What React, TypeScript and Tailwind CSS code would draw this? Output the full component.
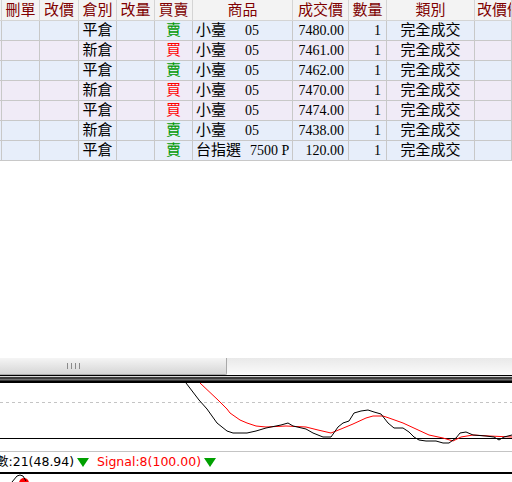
import React from 'react';

const rows = [
  { pos: '平倉', side: '賣', name: '小臺', code: '05', price: '7480.00' },
  { pos: '新倉', side: '買', name: '小臺', code: '05', price: '7461.00' },
  { pos: '平倉', side: '賣', name: '小臺', code: '05', price: '7462.00' },
  { pos: '新倉', side: '買', name: '小臺', code: '05', price: '7470.00' },
  { pos: '平倉', side: '買', name: '小臺', code: '05', price: '7474.00' },
  { pos: '新倉', side: '賣', name: '小臺', code: '05', price: '7438.00' },
  { pos: '平倉', side: '賣', name: '台指選', code: '7500 P', price: '120.00' },
];

const cols = 'grid grid-cols-[2px_38px_39px_38px_38px_38px_100px_56px_38px_88px_1fr]';
const cell = 'border-r border-b border-[#c8c8c8] flex items-center overflow-hidden whitespace-nowrap';
const headCell = 'border-r border-b border-[#d4d4d4] flex items-center justify-center overflow-hidden whitespace-nowrap';

const black =
  '186,383 199,400 207,409 217,423 227,431 233,433 247,433 256,431 266,428 281,425 288,423 293,426 306,429 313,433 323,437 331,437 338,427 343,423 349,421 354,413 361,411 368,410 374,412 381,414 388,423 394,428 403,428 409,432 414,437 419,440 426,441 436,441 443,443 449,443 456,438 460,433 466,432 473,435 486,436 494,437 499,440 504,437 512,435';
const red =
  '200,383 218,400 227,409 230,413 240,420 247,423 256,426 266,427 286,426 306,427 318,430 331,433 341,429 353,424 366,418 373,416 383,416 389,418 403,423 416,429 429,435 443,438 453,441 461,437 473,435 489,436 512,437';

function Tri() {
  return (
    <svg width="12" height="9" viewBox="0 0 12 9" className="shrink-0 block">
      <polygon points="0,0 12,0 6,9" fill="#00a000" />
    </svg>
  );
}

export default function App() {
  return (
    <div className="w-[512px] h-[482px] overflow-hidden bg-white flex flex-col font-[family-name:'Liberation_Serif','Noto_Sans_CJK_TC',serif] text-[15px] text-black">
      {/* Orders table */}
      <div className="h-[161px] shrink-0">
        <div className={`${cols} h-[21px] bg-[#f3f3f3] text-[#800000]`}>
          <div className={headCell}></div>
          <div className={headCell}>刪單</div>
          <div className={headCell}>改價</div>
          <div className={headCell}>倉別</div>
          <div className={headCell}>改量</div>
          <div className={headCell}>買賣</div>
          <div className={headCell}>商品</div>
          <div className={headCell}>成交價</div>
          <div className={headCell}>數量</div>
          <div className={headCell}>類別</div>
          <div className={`${headCell} !justify-start pl-[2px]`}>改價備註</div>
        </div>
        {rows.map((r, i) => {
          const bg = r.side === '買' ? 'bg-[#f0ebf7]' : 'bg-[#e7eefa]';
          return (
            <div key={i} className={`${cols} h-[20px] ${bg}`}>
              <div className={cell}></div>
              <div className={cell}></div>
              <div className={cell}></div>
              <div className={`${cell} justify-center`}>{r.pos}</div>
              <div className={cell}></div>
              <div className={`${cell} justify-center ${r.side === '買' ? 'text-[#ff0000]' : 'text-[#009900]'}`}>
                {r.side}
              </div>
              <div className={`${cell} pl-[3px]`}>
                <span className={r.code === '05' ? 'w-[49px]' : 'w-[54px]'}>{r.name}</span>
                <span className="text-[14px]">{r.code}</span>
              </div>
              <div className={`${cell} justify-end pr-[4px] text-[14px]`}>{r.price}</div>
              <div className={`${cell} justify-end pr-[5px] text-[14px]`}>1</div>
              <div className={`${cell} justify-center`}>完全成交</div>
              <div className={cell}></div>
            </div>
          );
        })}
      </div>

      <div className="h-[197px] shrink-0"></div>

      {/* Horizontal scrollbar */}
      <div className="h-[17px] shrink-0 flex bg-gradient-to-b from-[#e9e9e9] to-[#fbfbfb]">
        <div className="w-[227px] h-full bg-gradient-to-b from-[#f5f5f5] to-[#d6d6d6] border-r border-b border-[#a9a9a9] rounded-br-[2px] flex items-center pl-[67px] gap-[1px]">
          <div className="w-px h-[6px] bg-[#8a8a8a]"></div>
          <div className="w-px h-[6px] bg-transparent"></div>
          <div className="w-px h-[6px] bg-[#8a8a8a]"></div>
          <div className="w-px h-[6px] bg-transparent"></div>
          <div className="w-px h-[6px] bg-[#8a8a8a]"></div>
          <div className="w-px h-[6px] bg-transparent"></div>
          <div className="w-px h-[6px] bg-[#8a8a8a]"></div>
        </div>
      </div>

      {/* Chart divider */}
      <div className="h-[8px] shrink-0 flex flex-col">
        <div className="h-px bg-black"></div>
        <div className="h-px bg-[#d8d8d8]"></div>
        <div className="h-[2px] bg-[#3c3c3c]"></div>
        <div className="h-px bg-[#707070]"></div>
        <div className="h-px bg-[#3c3c3c]"></div>
        <div className="h-[2px] bg-black"></div>
      </div>

      {/* Indicator chart */}
      <svg width="512" height="68" viewBox="0 383 512 68" className="shrink-0 block">
        <line x1="0" y1="402.5" x2="512" y2="402.5" stroke="#c4c4c4" strokeDasharray="3,3" />
        <line x1="0" y1="438.5" x2="512" y2="438.5" stroke="#000" />
        <polyline points={red} fill="none" stroke="#ff0000" strokeWidth="1" />
        <polyline points={black} fill="none" stroke="#000" strokeWidth="1" />
      </svg>

      <div className="h-px bg-[#c4c4c4] shrink-0"></div>

      <div className="h-[20px] shrink-0 flex items-center font-[family-name:'DejaVu_Sans','Noto_Sans_CJK_TC',sans-serif] text-[12.5px] leading-none">
        <span className="ml-[-4px] w-[81px] shrink-0">數:21(48.94)</span>
        <Tri />
        <span className="ml-[8px] text-[#ff0000]">Signal:8(100.00)</span>
        <span className="ml-[3px]"><Tri /></span>
      </div>

      <div className="h-[2px] bg-black shrink-0"></div>

      <svg width="512" height="8" viewBox="0 474 512 8" className="shrink-0 block">
        <circle cx="24" cy="483" r="5" fill="#ff0000" />
        <polyline points="12,482 17,476 20,475 23,476 26,481" fill="none" stroke="#000" />
      </svg>
    </div>
  );
}
